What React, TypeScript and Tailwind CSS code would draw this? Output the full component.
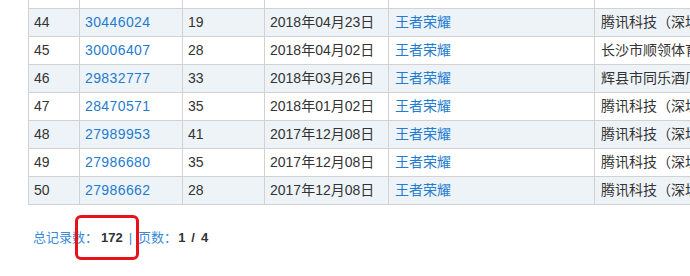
const ROWS = [
  { no: 44, id: '30446024', count: 19, date: '2018年04月23日', game: '王者荣耀', company: '腾讯科技（深圳）有限公司' },
  { no: 45, id: '30006407', count: 28, date: '2018年04月02日', game: '王者荣耀', company: '长沙市顺领体育文化传播有限公司' },
  { no: 46, id: '29832777', count: 33, date: '2018年03月26日', game: '王者荣耀', company: '辉县市同乐酒厂' },
  { no: 47, id: '28470571', count: 35, date: '2018年01月02日', game: '王者荣耀', company: '腾讯科技（深圳）有限公司' },
  { no: 48, id: '27989953', count: 41, date: '2017年12月08日', game: '王者荣耀', company: '腾讯科技（深圳）有限公司' },
  { no: 49, id: '27986680', count: 35, date: '2017年12月08日', game: '王者荣耀', company: '腾讯科技（深圳）有限公司' },
  { no: 50, id: '27986662', count: 28, date: '2017年12月08日', game: '王者荣耀', company: '腾讯科技（深圳）有限公司' },
]

const FONT = "font-['Liberation_Sans','Noto_Sans_CJK_SC',sans-serif]"
const CELL = 'border border-[#d2d2d2] px-[5px] py-0 leading-[27px]'

export default function App() {
  return (
    <div className={`relative h-[276px] w-[690px] overflow-hidden bg-white ${FONT}`}>
      {/* results table — the row above 44 is scrolled out of view, only its bottom edge shows */}
      <table className="-mt-[20px] ml-[28px] w-[720px] table-fixed border-collapse text-[14px] text-[#333]">
        <colgroup>
          <col className="w-[51px]" />
          <col className="w-[103px]" />
          <col className="w-[82px]" />
          <col className="w-[124px]" />
          <col className="w-[206px]" />
          <col className="w-[154px]" />
        </colgroup>
        <tbody>
          <tr className="h-[28px] bg-white">
            <td className={CELL} />
            <td className={CELL} />
            <td className={CELL} />
            <td className={CELL} />
            <td className={CELL} />
            <td className={CELL} />
          </tr>
          {ROWS.map((r) => (
            <tr key={r.no} className={r.no % 2 === 0 ? 'h-[28px] bg-[#eef3f8]' : 'h-[28px] bg-white'}>
              <td className={CELL}>{r.no}</td>
              <td className={`${CELL} tracking-[0.4px] text-[#1f7ccf]`}>{r.id}</td>
              <td className={CELL}>{r.count}</td>
              <td className={CELL}>{r.date}</td>
              <td className={`${CELL} px-[6px] text-[#1f7ccf]`}>{r.game}</td>
              <td className={`${CELL} overflow-hidden whitespace-nowrap px-[6px]`}>{r.company}</td>
            </tr>
          ))}
        </tbody>
      </table>

      {/* pager summary */}
      <div className="ml-[33px] mt-[23px] flex items-center text-[13px] leading-[20px]">
        <span className="text-[#3a8ad6]">总记录数：</span>
        <span className="ml-[3px] font-bold text-[#333]">172</span>
        <span className="ml-[6px] text-[#3a8ad6]">|</span>
        <span className="ml-[6px] text-[#3a8ad6]">页数：</span>
        <span className="ml-[1px] flex items-center gap-[6px] font-bold text-[#333]">
          <span>1</span>
          <span>/</span>
          <span>4</span>
        </span>
      </div>

      {/* red annotation box */}
      <div className="absolute left-[75px] top-[215px] h-[45px] w-[64px] rounded-[6px] border-[3px] border-[#e8121b]" />
    </div>
  )
}
